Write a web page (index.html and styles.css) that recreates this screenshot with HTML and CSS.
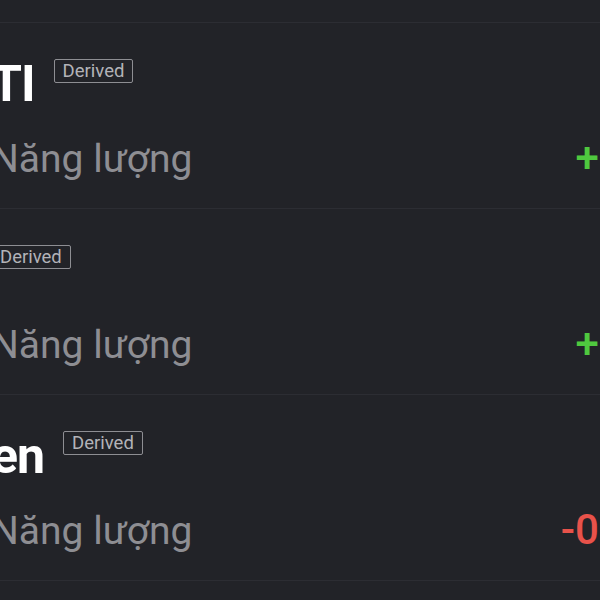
FILE: index.html
```html
<!DOCTYPE html>
<html lang="vi">
<head>
  <meta charset="UTF-8">
  <meta name="viewport" content="width=device-width, initial-scale=1.0">
  <title>Năng lượng</title>
  <link rel="stylesheet" href="styles.css">
</head>
<body>
  <ul class="list">
    <li class="row">
      <div class="head">
        <span class="name">TI</span>
        <span class="badge">Derived</span>
      </div>
      <div class="sub">
        <span class="category">Năng lượng</span>
        <span class="change up">+1.24%</span>
      </div>
    </li>
    <li class="row">
      <div class="head">
        <span class="badge">Derived</span>
      </div>
      <div class="sub">
        <span class="category">Năng lượng</span>
        <span class="change up">+0.87%</span>
      </div>
    </li>
    <li class="row">
      <div class="head">
        <span class="name">en</span>
        <span class="badge">Derived</span>
      </div>
      <div class="sub">
        <span class="category">Năng lượng</span>
        <span class="change down">-0.452%</span>
      </div>
    </li>
  </ul>
</body>
</html>
```

FILE: styles.css
```css
html, body {
  margin: 0;
  padding: 0;
  background-color: #222328;
  overflow: hidden;
}
body {
  font-family: Roboto, "Noto Sans", sans-serif;
  width: 600px;
  height: 600px;
}
.list {
  list-style: none;
  margin: 22px 0 0 -9px;
  padding: 0;
  width: 722px;
  border-top: 1px solid #2c2d33;
}
.row {
  padding: 36px 0 26px 0;
  border-bottom: 1px solid #2c2d33;
}
.head {
  display: flex;
  align-items: flex-start;
  height: 50px;
}
.name {
  font-size: 50px;
  line-height: 50px;
  font-weight: 700;
  letter-spacing: -1px;
  color: #ffffff;
  margin-right: 19px;
  white-space: nowrap;
}
.badge {
  font-size: 18.5px;
  line-height: 22px;
  padding: 0 8px;
  color: #b3b3b8;
  border: 1.5px solid #8e8e93;
  border-radius: 2px;
}
.sub {
  display: flex;
  justify-content: space-between;
  align-items: baseline;
  margin-top: 25px;
  height: 48px;
  line-height: 48px;
}
.category {
  font-size: 39px;
  color: #8e8e93;
}
.change {
  font-size: 42px;
  font-weight: 500;
}
.up {
  color: #4fc83f;
}
.down {
  color: #e8524a;
}
```
